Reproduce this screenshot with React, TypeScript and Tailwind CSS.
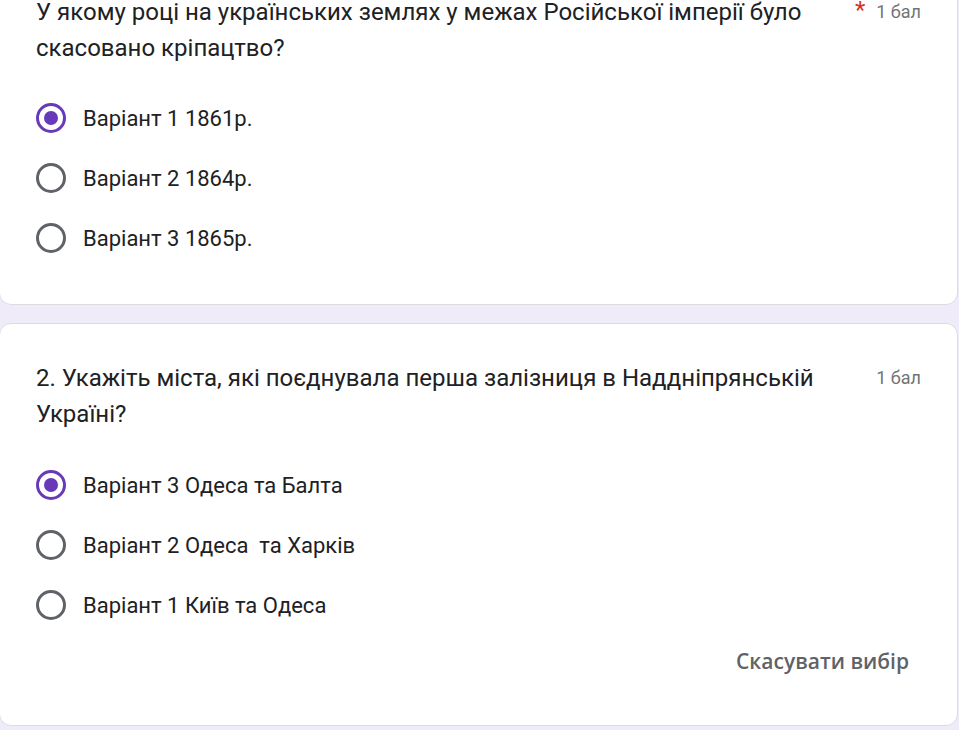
import React from 'react';

type Question = {
  title: string;
  required?: boolean;
  options: string[];
  selected: number;
  clearable?: boolean;
};

const questions: Question[] = [
  {
    title: 'У якому році на українських землях у межах Російської імперії було скасовано кріпацтво?',
    required: true,
    options: ['Варіант 1 1861р.', 'Варіант 2 1864р.', 'Варіант 3 1865р.'],
    selected: 0,
  },
  {
    title: '2. Укажіть міста, які поєднувала перша залізниця в Наддніпрянській Україні?',
    options: ['Варіант 3 Одеса та Балта', 'Варіант 2 Одеса  та Харків', 'Варіант 1 Київ та Одеса'],
    selected: 0,
    clearable: true,
  },
];

function Radio({ checked }: { checked: boolean }) {
  return (
    <div
      className={
        checked
          ? 'w-[30px] h-[30px] rounded-full border-[3px] border-[#673ab7] flex items-center justify-center shrink-0'
          : 'w-[30px] h-[30px] rounded-full border-[3px] border-[#5f6368] shrink-0'
      }
    >
      {checked && <div className="w-[14px] h-[14px] rounded-full bg-[#673ab7]" />}
    </div>
  );
}

function QuestionCard({ q, first }: { q: Question; first?: boolean }) {
  return (
    <div
      className={
        (first ? '-mt-[43px] ' : '') +
        'bg-white rounded-[12px] border border-[#dadce0] px-9 pt-9 pb-9 -ml-px mr-[1px]'
      }
    >
      <div className="flex items-start gap-4">
        <div className="flex-1 text-[24px] leading-[36px] text-[#202124]">{q.title}</div>
        <div className="flex items-center shrink-0 h-[36px] -mt-[1px]">
          {q.required && <span className="text-[#d93025] text-[24px] leading-none mr-[11px] -mt-[2px]">*</span>}
          <span className="text-[18px] text-[#70757a]">1 бал</span>
        </div>
      </div>
      <div className={(first ? 'mt-[22px]' : 'mt-[23px]') + ' flex flex-col'}>
        {q.options.map((o, i) => (
          <div key={i} className="h-[60px] flex items-center gap-[17px]">
            <Radio checked={i === q.selected} />
            <span className="text-[22px] text-[#202124] whitespace-pre">{o}</span>
          </div>
        ))}
      </div>
      {q.clearable && (
        <div className="flex justify-end">
          <button className="h-[54px] px-3 text-[21px] font-semibold text-[#5f6368] [font-family:'Open_Sans',sans-serif] rounded">
            Скасувати вибір
          </button>
        </div>
      )}
    </div>
  );
}

export default function App() {
  return (
    <div className="w-[959px] h-[730px] overflow-hidden bg-[#f0ebf8] [font-family:Roboto,'Liberation_Sans',sans-serif]">
      <div className="flex flex-col gap-[18px]">
        {questions.map((q, i) => (
          <QuestionCard key={i} q={q} first={i === 0} />
        ))}
      </div>
    </div>
  );
}
